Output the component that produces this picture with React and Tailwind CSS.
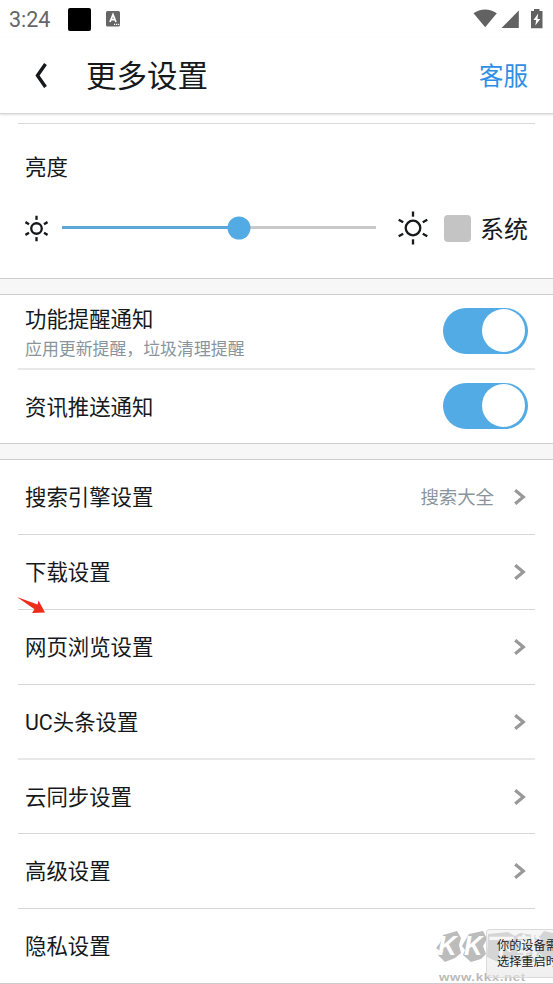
import React, { useState } from "react";

const links = [
  { label: "搜索引擎设置", value: "搜索大全", row: "h-[75px] border-b border-[#d6d6d6]" },
  { label: "下载设置", row: "h-[75px] border-b border-[#d6d6d6]", marked: true },
  { label: "网页浏览设置", row: "h-[75px] border-b border-[#d6d6d6]" },
  { label: "UC头条设置", row: "h-[75px] border-b-2 border-[#e8e8e8]" },
  { label: "云同步设置", row: "h-[74px] border-b border-[#d6d6d6]" },
  { label: "高级设置", row: "h-[75px] border-b border-[#d6d6d6]" },
  { label: "隐私设置", row: "h-[74px]" },
];

const Sun = ({ className, r, inner, outer, stroke }) => (
  <svg className={className} viewBox="-18 -18 36 36" fill="none" stroke="#16191c" strokeWidth={stroke}>
    <circle r={r} />
    {[0, 60, 120, 180, 240, 300].map((angle) => (
      <path key={angle} d={`M0 ${-inner}V${-outer}`} transform={`rotate(${angle})`} />
    ))}
  </svg>
);

const Chevron = () => (
  <svg className="h-4 w-3" viewBox="0 0 12 16" fill="none" stroke="#999" strokeWidth="3.2">
    <path d="M1.2 1.2L9.3 8L1.2 14.8" />
  </svg>
);

const Toggle = () => {
  const [on, setOn] = useState(true);

  return (
    <button
      className={`flex h-[46px] w-[85px] items-center rounded-full px-[3px] ${
        on ? "justify-end bg-[#52abe4]" : "justify-start bg-gray-300"
      }`}
      onClick={() => setOn(!on)}
    >
      <span className="h-[43px] w-[43px] rounded-full bg-white" />
    </button>
  );
};

const Gap = () => <div className="h-[17px] border-y border-[#cdcdcd] bg-[#f7f7f7]" />;

const StatusBar = () => (
  <div className="flex h-[38px] items-center pl-[9px] text-[#666]">
    <span className="w-[59px] pt-[2px] text-[21.5px] leading-none">3:24</span>
    <span className="h-[23px] w-[23px] rounded-[2px] bg-black" />
    <svg className="ml-[15px] h-4 w-[14px]" viewBox="0 0 14 16">
      <rect width="14" height="15.5" rx="1.5" fill="#666" />
      <path d="M4 11L7 3.6L10 11M5 8.7H9" fill="none" stroke="#fff" strokeWidth="1.7" />
      <path d="M8 13.4h1.2M10 13.4h1.2M12 13.4h1.2" stroke="#fff" strokeWidth="1.2" />
    </svg>
    {/* Wifi, signal and battery */}
    <svg className="mr-[10px] ml-auto h-[20px] w-[70px]" viewBox="0 0 70 20" fill="#626262">
      <path d="M.5 4.3C7-.8 17-.8 23.8 4.3L12.2 18.2z" />
      <path d="M28.5 19L45.8 1.5V19z" />
      <path d="M58 2h3V0h5.5V2H69.5V19.3H58z" />
      <path d="M65.2 4.5L60.5 11h2.7l-.9 5.5l5-6.5h-2.8z" fill="#fff" />
    </svg>
  </div>
);

const Watermark = () => (
  <div className="absolute right-0 bottom-0 h-[56px] w-[118px] overflow-hidden">
    <svg className="absolute top-[3px] left-[1px] h-[33px] w-[117px]" viewBox="0 0 117 33">
      <path
        d="M7 4L21 0L25 7L23 14L25 22L19 27L9 31L2 24L4 20L0 17L4 12zM33 3L47 0L51 8L47 15L50 23L45 28L35 31L27 24L29 19L26 15zM52 3L72 1L79 5L84 2L104 5L108 0L117 2V29L96 31L70 28L62 31L51 26z"
        fill="#bcbcbc"
      />
    </svg>
    <div className="absolute top-[5px] left-[3px] flex font-['Liberation_Sans'] text-[27px] leading-[27px] font-bold text-white italic">
      <span className="w-[26px] origin-left scale-x-[0.95]">K</span>
      <span className="w-[24px] origin-left scale-x-[0.95]">K</span>
      <span className="font-['Noto_Sans_CJK_SC'] not-italic">下载</span>
    </div>
    <span className="absolute bottom-0 left-[4px] origin-left scale-x-[1.16] font-['Liberation_Sans'] text-[11.5px] leading-[14px] font-bold tracking-[0.5px] text-[#bababa]">
      www.kkx.net
    </span>
    <div className="absolute top-[1px] left-[51px] h-[49px] w-[80px] rounded-[4px] border border-[#d5d5d5]/80 bg-linear-to-b from-[#eeeeee]/50 to-[#e6e6e6]/60 pt-[8px] pl-[10px] text-[12.2px] leading-[16px] whitespace-nowrap text-[#222]">
      <p>你的设备需</p>
      <p>选择重启时</p>
    </div>
  </div>
);

const App = () => {
  const [brightness] = useState(56.4);

  return (
    <div className="relative h-[984px] w-[553px] overflow-hidden bg-white font-[Roboto,'Noto_Sans_CJK_SC',sans-serif] text-[21.4px] leading-none text-[#16191c]">
      <StatusBar />

      <header className="flex h-[76px] items-center border-b border-[#d3d5d4] pr-[25px] pl-[34px] shadow-[0_1px_2px_rgba(0,0,0,0.12)]">
        <svg className="h-[26px] w-[13px]" viewBox="0 0 13 26" fill="none" stroke="#16191c" strokeWidth="3.4">
          <path d="M11.5 1L3.5 12.5L11.5 24" />
        </svg>
        <h1 className="ml-[39px] pt-[4px] text-[30.5px]">更多设置</h1>
        <a className="ml-auto pt-[4px] text-[24.5px] text-[#2e8fe6]">客服</a>
      </header>

      {/* Brightness */}
      <section className="h-[164px] pt-[9px]">
        <div className="mx-[18px] border-t border-[#d9d9d9] pt-[33px] pl-[7px]">亮度</div>
        <div className="mt-[32px] flex h-[36px] items-center pr-[25px] pl-[23px]">
          <Sun className="h-[27px] w-[27px]" r={7} inner={11.5} outer={17} stroke={3.1} />
          <div className="relative mb-px ml-[12px] h-[3px] w-[314px] bg-[#c9c9c9]">
            <div className="h-full bg-[#5ba7d9]" style={{ width: `${brightness}%` }} />
            <span
              className="absolute top-1/2 h-[23px] w-[23px] -translate-x-1/2 -translate-y-1/2 rounded-full bg-[#52abe4]"
              style={{ left: `${brightness}%` }}
            />
          </div>
          <Sun className="ml-[19px] h-[36px] w-[36px]" r={7.3} inner={11.3} outer={16.5} stroke={2.3} />
          <span className="ml-[13px] h-[27px] w-[27px] rounded-[4px] bg-[#c4c4c4]" />
          <span className="ml-auto pt-[3px] text-[24px]">系统</span>
        </div>
      </section>
      <Gap />

      {/* Notifications */}
      <section className="px-[18px]">
        <div className="flex h-[75px] items-center justify-between border-b-2 border-[#e8e8e8] px-[7px] pb-[2px]">
          <div className="pt-[6px]">
            <p>功能提醒通知</p>
            <p className="mt-[10px] text-[16.9px] text-[#89959d]">应用更新提醒，垃圾清理提醒</p>
          </div>
          <Toggle />
        </div>
        <div className="flex h-[73px] items-center justify-between px-[7px] pb-[2px]">
          <p className="pt-[4px]">资讯推送通知</p>
          <Toggle />
        </div>
      </section>
      <Gap />

      <section className="px-[18px]">
        {links.map(({ label, value, row, marked }) => (
          <div key={label} className={`relative flex items-center pr-[9px] pl-[7px] ${row}`}>
            <span className="pt-[2px]">{label}</span>
            {value && <span className="mr-[20px] ml-auto pt-[2px] text-[18.4px] text-[#89959d]">{value}</span>}
            <span className={value ? "" : "ml-auto"}>
              <Chevron />
            </span>
            {marked && (
              <svg className="absolute -bottom-[5px] -left-[1px] h-[17px] w-[29px]" viewBox="0 0 29 17">
                <path d="M0 0L20.5 7.5L21.5 3.5L28 15.5L15 16L17.5 12.3z" fill="#ee2c1c" />
              </svg>
            )}
          </div>
        ))}
      </section>
      <div className="h-px bg-[#cdcdcd]" />

      <Watermark />
    </div>
  );
};

export default App;
